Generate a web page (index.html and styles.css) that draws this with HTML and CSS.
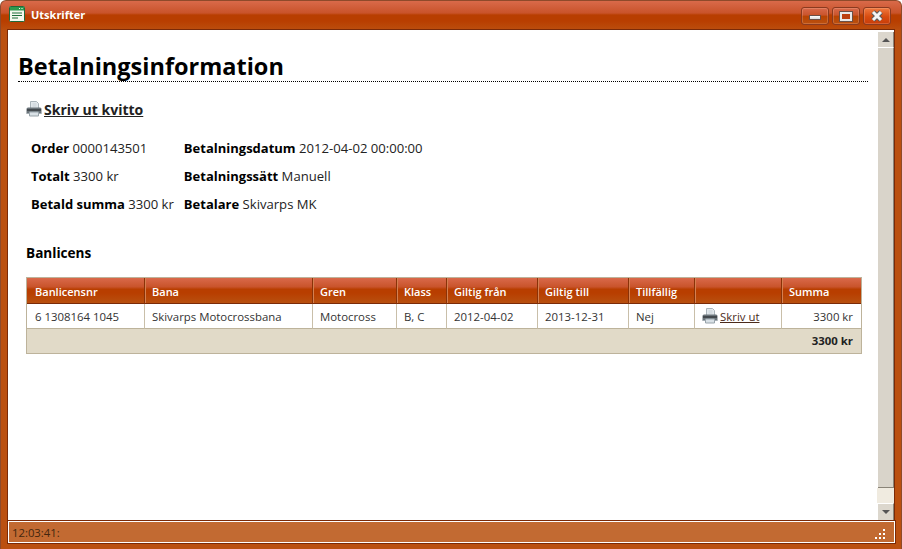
FILE: index.html
```html
<!DOCTYPE html>
<html lang="sv">
<head>
<meta charset="utf-8">
<title>Utskrifter</title>
<link rel="stylesheet" href="styles.css">
</head>
<body>
<svg class="defs" width="0" height="0" aria-hidden="true">
  <symbol id="printer" viewBox="0 0 16 16">
    <path d="M4.500 .5h6l2 2v5h-8z" fill="#e2e8ec" stroke="#aab4ba"/>
    <path d="M6.500 3h4M6.500 5h4" stroke="#c8d0d6"/>
    <path d="M.5 8q0-1.500 1.500-1.500h12q1.500 0 1.500 1.500v4.500h-15z" fill="#6b747a"/>
    <path d="M1 8h14v2h-14z" fill="#43494e"/>
    <path d="M3.500 11h9v4h-9z" fill="#d9e1e6" stroke="#97a2a9"/>
    <path d="M.5 12h3v1h-3zM12.500 12h3v1h-3z" fill="#a3acb2"/>
  </symbol>
</svg>
<div class="window">
  <header class="titlebar">
    <svg class="appicon" width="16" height="16" viewBox="0 0 16 16" aria-hidden="true">
      <rect x=".5" y=".5" width="15" height="15" rx="1" fill="#f4f8ee" stroke="#1f6a3a"/>
      <rect x="1" y="1" width="14" height="3.500" fill="#2f9a4e"/>
      <path d="M10 2.500h1M12.500 2.500h1" stroke="#fff"/>
      <path d="M3 7h10M3 9.500h10M3 12h6" stroke="#1c6d39" stroke-width="1.200"/>
    </svg>
    <span class="wintitle">Utskrifter</span>
    <div class="controls">
      <button class="ctl" aria-label="Minimera"><span class="min-glyph"></span></button>
      <button class="ctl" aria-label="Maximera"><span class="max-glyph"></span></button>
      <button class="ctl ctl-close" aria-label="Stäng">
        <svg width="16" height="14" viewBox="0 0 16 14" aria-hidden="true"><path d="M4 3l8 8M12 3l-8 8" stroke="#59595a" stroke-width="5"/><path d="M4 3l8 8M12 3l-8 8" stroke="#f4f4f4" stroke-width="3"/></svg>
      </button>
    </div>
  </header>
  <div class="client">
    <main class="content">
      <h1 class="heading">Betalningsinformation</h1>
      <a class="print-receipt" href="#"><svg class="icon" width="16" height="16" aria-hidden="true"><use href="#printer"/></svg><span class="link-text">Skriv ut kvitto</span></a>
      <table class="info">
        <tr><td><b>Order</b> 0000143501</td><td><b>Betalningsdatum</b> 2012-04-02 00:00:00</td></tr>
        <tr><td><b>Totalt</b> 3300 kr</td><td><b>Betalningssätt</b> Manuell</td></tr>
        <tr><td><b>Betald summa</b> 3300 kr</td><td><b>Betalare</b> Skivarps MK</td></tr>
      </table>
      <h2 class="section">Banlicens</h2>
      <table class="grid">
        <colgroup>
          <col class="c1"><col class="c2"><col class="c3"><col class="c4"><col class="c5"><col class="c6"><col class="c7"><col class="c8"><col class="c9">
        </colgroup>
        <thead>
          <tr><th>Banlicensnr</th><th>Bana</th><th>Gren</th><th>Klass</th><th>Giltig från</th><th>Giltig till</th><th>Tillfällig</th><th></th><th>Summa</th></tr>
        </thead>
        <tbody>
          <tr><td>6 1308164 1045</td><td>Skivarps Motocrossbana</td><td>Motocross</td><td>B, C</td><td>2012-04-02</td><td>2013-12-31</td><td>Nej</td><td><a class="print-row" href="#"><svg class="icon" width="16" height="16" aria-hidden="true"><use href="#printer"/></svg><span class="row-link">Skriv ut</span></a></td><td class="num">3300 kr</td></tr>
        </tbody>
        <tfoot>
          <tr><td colspan="8"></td><td class="num"><b>3300 kr</b></td></tr>
        </tfoot>
      </table>
    </main>
    <div class="scrollbar" aria-hidden="true">
      <div class="sb-btn"><span class="arrow-up"></span></div>
      <div class="sb-thumb"></div>
      <div class="sb-rest"></div>
      <div class="sb-btn sb-btn-down"><span class="arrow-down"></span></div>
    </div>
  </div>
  <footer class="status">
    <span class="clock">12:03:41:</span>
    <svg class="grip" width="12" height="12" viewBox="0 0 12 12" aria-hidden="true"><path d="M8 0h2v2h-2zM4 4h2v2h-2zM8 4h2v2h-2zM0 8h2v2h-2zM4 8h2v2h-2zM8 8h2v2h-2z" fill="#fff"/></svg>
  </footer>
</div>
</body>
</html>
```
FILE: styles.css
```css
* { box-sizing: border-box; }
html, body { margin: 0; height: 100%; overflow: hidden; }
body { font-family: "Open Sans", "Noto Sans", sans-serif; background: #fff; }
.defs { position: absolute; }

.window {
  width: 902px;
  height: 549px;
  display: flex;
  flex-direction: column;
  padding: 0 6px 6px 6px;
  border-radius: 6px 6px 0 0;
  border: 1px solid #8f4a2a;
  border-bottom: 0;
  background: linear-gradient(#d96a4a 0, #c9532a 12px, #b83e00 14px, #b83e00 20px, #bb5010 30px, #bb5010 100%);
}

.titlebar {
  flex: none;
  height: 28px;
  display: flex;
  align-items: center;
  gap: 6px;
  margin-left: 2px;
  padding-bottom: 1px;
}
.appicon { flex: none; margin-top: -1px; }
.wintitle { color: #fff; font: bold 11px "Open Sans", sans-serif; }
.controls { margin-left: auto; display: flex; gap: 3px; align-self: flex-start; margin-top: 6px; margin-right: 4px; }
.ctl {
  width: 28px;
  height: 18px;
  padding: 0;
  display: flex;
  align-items: center;
  justify-content: center;
  border: 1px solid #8a3a20;
  border-radius: 3px;
  background: linear-gradient(#d9694a 0, #c9542c 45%, #b84300 50%, #bb5010 100%);
  box-shadow: inset 0 0 0 1px rgba(255, 200, 170, .25);
}
.ctl-close { background: linear-gradient(#f07a40, #d84c10 55%, #c83c08); }
.min-glyph { width: 12px; height: 5px; margin-top: 3px; background: linear-gradient(#fff, #d8d8d8); border: 1px solid #6a5048; }
.max-glyph { width: 12px; height: 9px; background: #bb4010; border: 2px solid #e8e8e8; outline: 1px solid #6a5048; }

.client {
  flex: 1;
  min-height: 0;
  display: flex;
  background: #fff;
  border: 1px solid #7a2a08;
  border-bottom: 0;
}
.content { flex: 1; min-width: 0; padding: 0 10px; color: #000; }
.heading {
  margin: 20px 0 0;
  height: 32px;
  font-size: 23.5px;
  line-height: 32px;
  font-weight: 700;
  border-bottom: 1px dotted #000;
}
.print-receipt {
  display: flex;
  align-items: center;
  gap: 2px;
  margin: 17px 0 0 8px;
  height: 20px;
  color: #222;
  text-decoration: none;
  font-size: 14px;
  font-weight: 700;
}
.link-text { text-decoration: underline; }

.info { border-collapse: collapse; margin: 15px 0 0 8px; font-size: 13.1px; color: #222; }
.info td { height: 28px; padding: 0 5px; white-space: nowrap; }
.info b { color: #000; font-weight: 700; font-size: 13px; }

.section { margin: 25px 0 0 8px; height: 34px; line-height: 20px; font-size: 13.6px; font-weight: 700; }

.grid {
  margin: 0 0 0 8px;
  width: 836px;
  table-layout: fixed;
  border-collapse: separate;
  border-spacing: 0;
  border: 1px solid #bdb39b;
  font-size: 11.4px;
  color: #333;
}
.c1 { width: 117px; } .c2 { width: 168px; } .c3 { width: 84px; } .c4 { width: 50px; }
.c5 { width: 91px; } .c6 { width: 91px; } .c7 { width: 66px; } .c8 { width: 87px; } .c9 { width: 80px; }
.grid th {
  height: 26px;
  padding: 1px 7px 0;
  text-align: left;
  font-weight: 600;
  color: #fff;
  font-size: 11px;
  background: linear-gradient(#d9694a 0, #c9542c 35%, #b83e00 45%, #b83e00 60%, #b8500f 100%);
  border-left: 1px solid #8a3208;
  border-bottom: 1px solid #7a2a08;
  box-shadow: inset 1px 0 0 #d58050;
}
.grid th:first-child, .grid td:first-child { border-left: 0; box-shadow: none; padding-left: 8px; }
.grid tbody td { height: 25px; padding: 0 7px; border-left: 1px solid #c9bfa9; border-bottom: 1px solid #bdb39b; white-space: nowrap; }
.grid tfoot td { height: 24px; padding: 0 8px 1px; background: #e1dac8; border-left: 0; }
.grid td.num { text-align: right; padding-right: 8px; }
.grid tfoot b { color: #222; }
.print-row { display: flex; align-items: center; gap: 2px; color: #333; text-decoration: none; }
.row-link { text-decoration: underline; color: #4a2a1a; }

.scrollbar { flex: none; width: 16px; display: flex; flex-direction: column; margin-top: 2px; background: #fff; }
.sb-btn { flex: none; height: 16px; background: #dcd7cd; border-right: 1px solid #8a8478; border-bottom: 1px solid #fff; display: flex; align-items: center; justify-content: center; }
.sb-btn-down { height: 17px; border-top: 1px solid #fff; border-bottom: 0; }
.sb-thumb { flex: none; height: 440px; background: #d9d4ca; border-right: 1px solid #8a8478; border-bottom: 1px solid #8a8478; }
.sb-rest { flex: 1; margin-left: -1px; background: #f0ebe0; }
.arrow-up { border: 4px solid transparent; border-top: 0; border-bottom: 4px solid #555; }
.arrow-down { border: 4px solid transparent; border-bottom: 0; border-top: 4px solid #555; }

.status {
  flex: none;
  height: 22px;
  display: flex;
  align-items: center;
  justify-content: space-between;
  background: #c26a32;
  border: 1px solid #fff;
  outline: 1px solid #7a2a08;
  padding: 0 7px 0 3px;
  margin: 1px 0 0 1px;
  font-size: 11.300px;
  color: #43260e;
}
.grip { margin-top: 6px; }
```
